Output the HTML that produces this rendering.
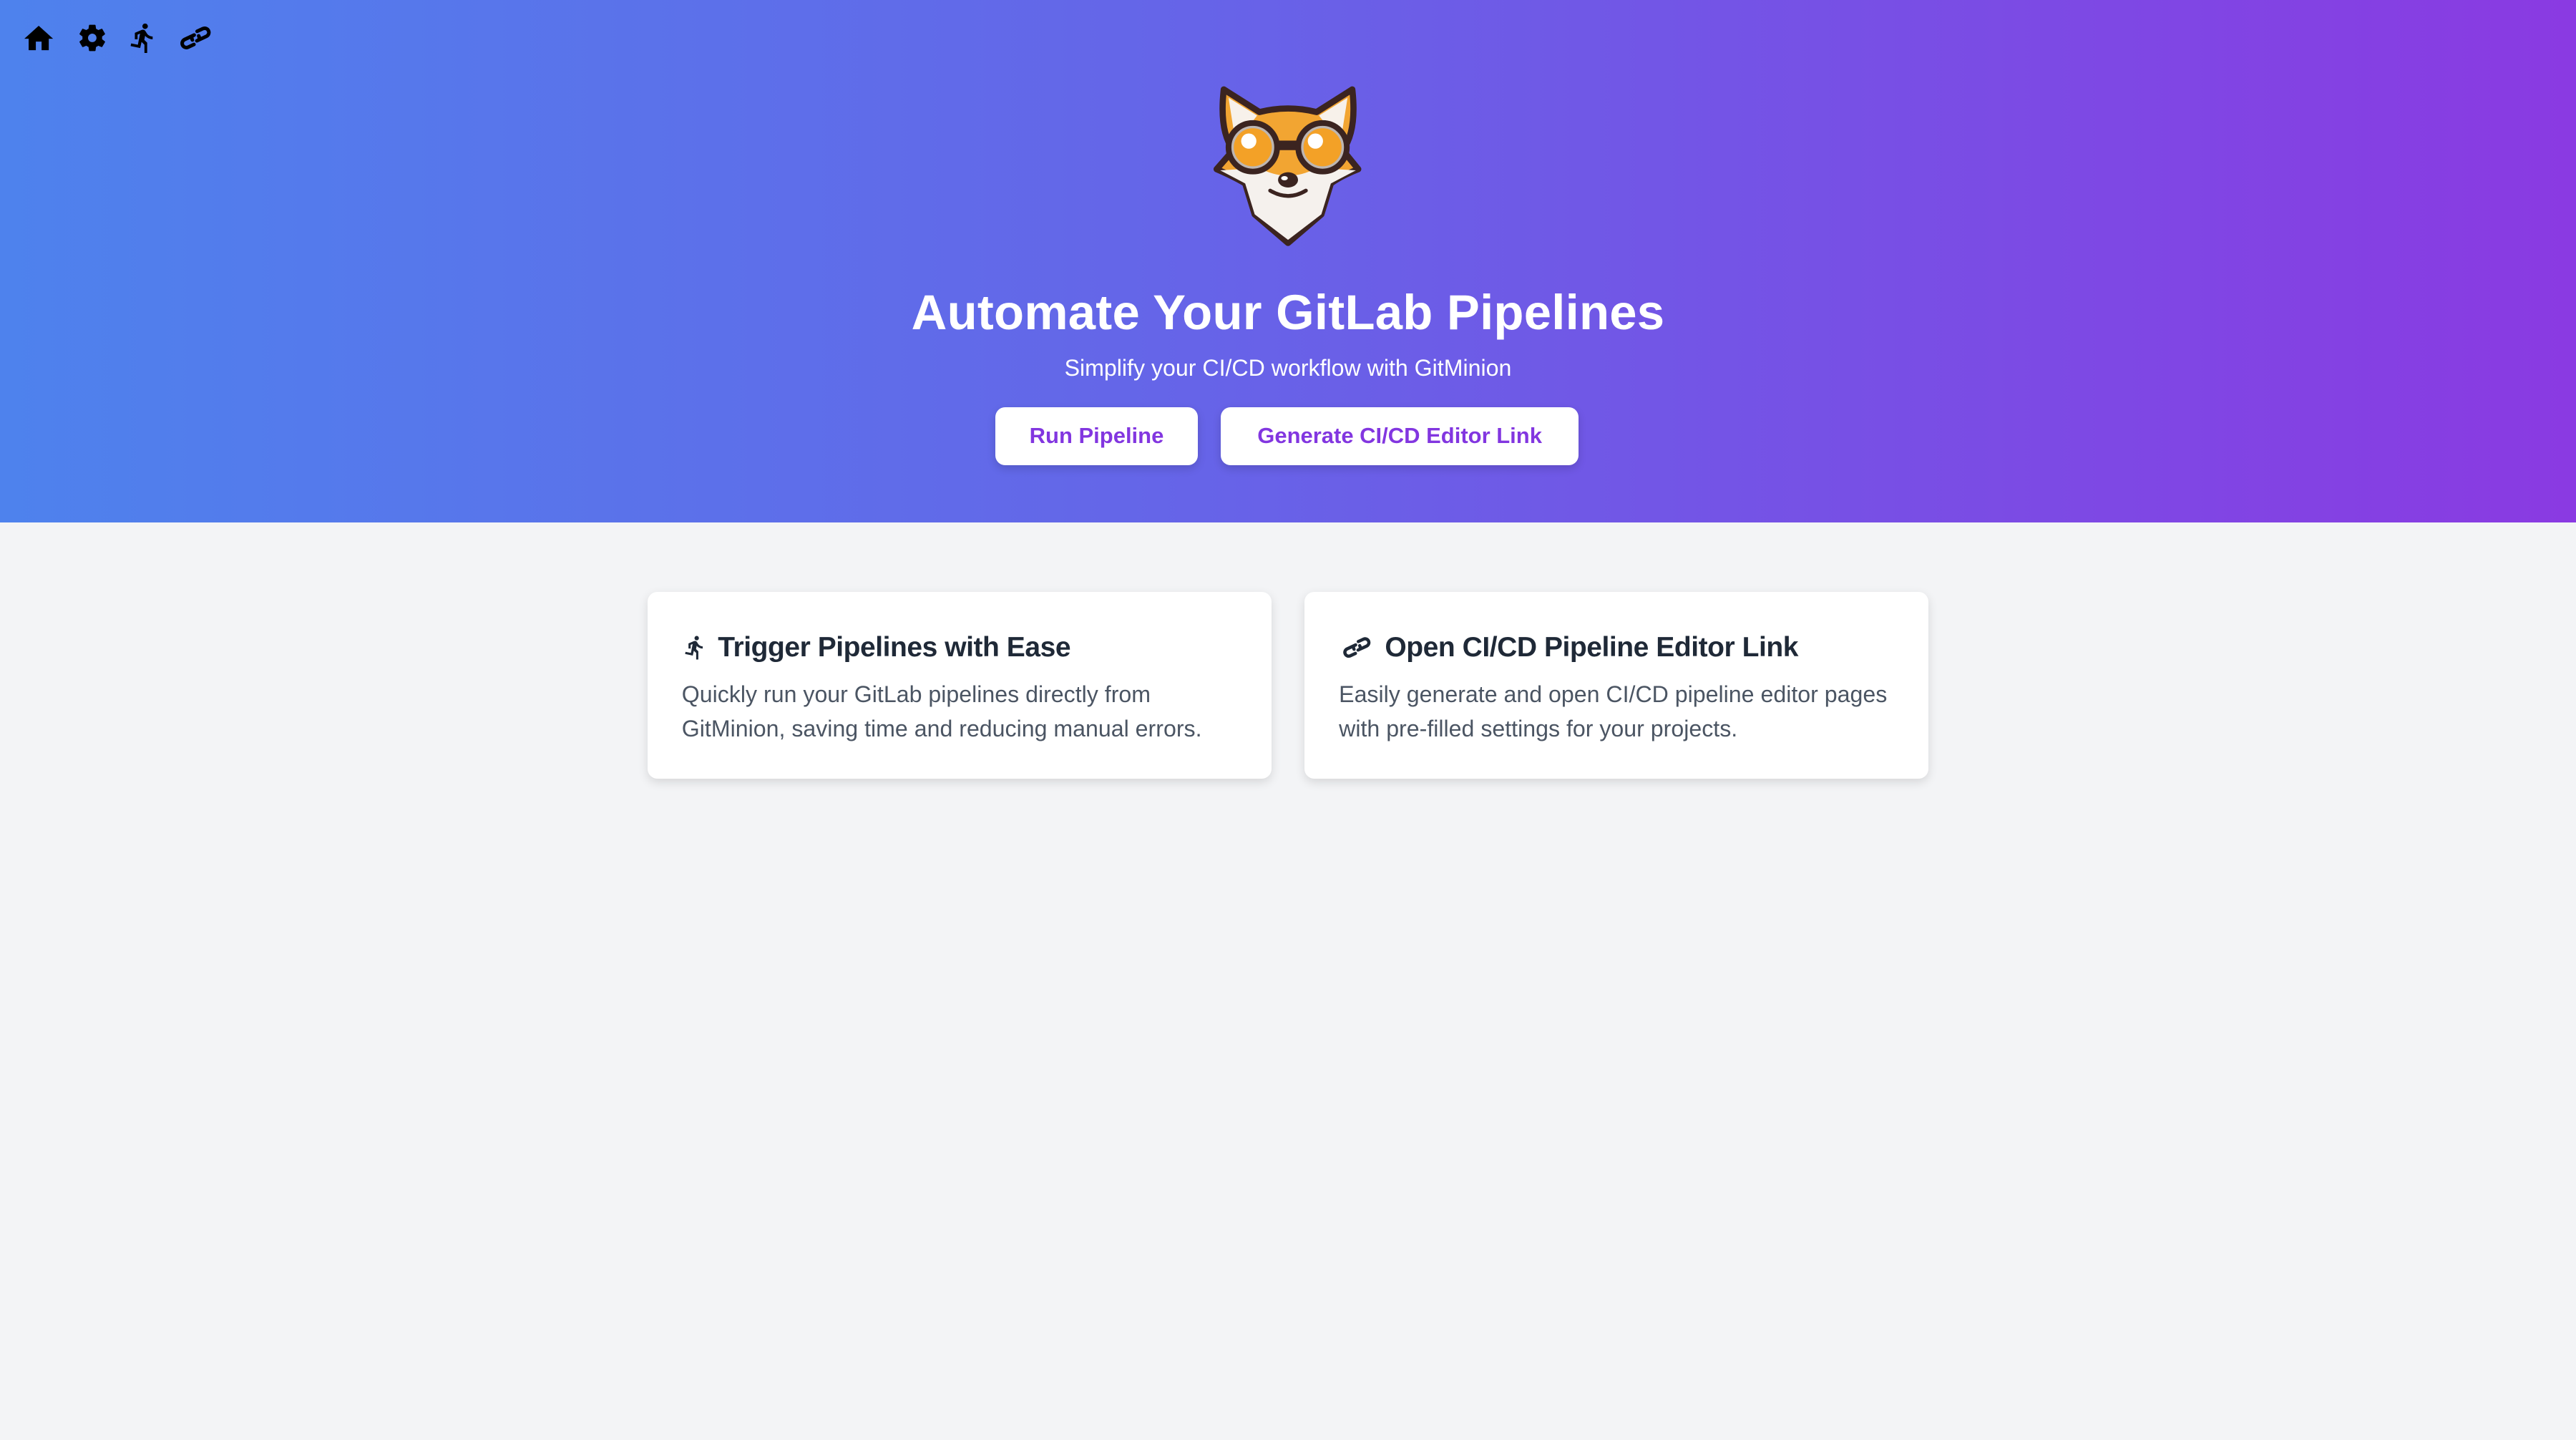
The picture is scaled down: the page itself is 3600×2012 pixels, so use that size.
<!DOCTYPE html>
<html><head><meta charset="utf-8">
<style>
html{zoom:2.2959;}
*{box-sizing:border-box;margin:0;padding:0}
body{width:1568px;height:876px;background:#f3f4f6;font-family:"Liberation Sans",sans-serif;overflow:hidden;position:relative}
.hero{position:absolute;left:0;top:0;width:1568px;height:318px;background:linear-gradient(to right,#4e82ed 0%,#6565e8 45%,#8a3ae2 100%)}
.nav{position:absolute;top:13px;left:13px;height:20px}
.nav svg{position:absolute;top:0}
.fox{position:absolute;left:723px;top:43.6px;width:122px;height:113px}
h1{position:absolute;top:173px;left:0;width:1568px;text-align:center;color:#fff;font-size:30px;font-weight:bold;letter-spacing:0.1px}
.sub{position:absolute;top:216px;left:0;width:1568px;text-align:center;color:#fff;font-size:14px}
.btn{position:absolute;top:248px;height:35px;background:#fff;border-radius:6px;color:#8236e0;font-weight:bold;font-size:13.5px;line-height:35px;text-align:center;box-shadow:0 2px 5px rgba(0,0,0,.15)}
.card{position:absolute;top:360px;width:380px;height:114px;background:#fff;border-radius:6px;box-shadow:0 2px 6px rgba(0,0,0,.12);padding:21px}
.card h2{font-size:17px;font-weight:bold;color:#1f2937;height:24px;line-height:24px;display:flex;align-items:center;gap:6px;margin-top:1px;letter-spacing:-0.2px}
.card p{font-size:14px;line-height:21px;color:#4b5563;margin-top:6px}
</style></head><body>
<div class="hero">
 <div class="nav">
  <svg style="left:0" width="21" height="21" viewBox="0 0 24 24"><path d="M10 20v-6h4v6h5v-8h3L12 3 2 12h3v8z" fill="#000"/></svg>
  <svg style="left:33px" width="20" height="20" viewBox="0 0 24 24"><path fill="#000" d="M19.14 12.94c.04-.3.06-.61.06-.94 0-.32-.02-.64-.07-.94l2.030-1.58c.18-.14.23-.41.12-.61l-1.92-3.32c-.12-.22-.37-.29-.59-.22l-2.39.96c-.5-.38-1.030-.7-1.62-.94l-.36-2.54c-.04-.24-.24-.41-.48-.41h-3.84c-.24 0-.43.17-.47.41l-.36 2.54c-.59.24-1.13.57-1.62.94l-2.39-.96c-.22-.08-.47 0-.59.22L2.74 8.87c-.12.21-.08.47.12.61l2.03 1.58c-.05.3-.09.63-.09.94s.02.64.07.94l-2.03 1.58c-.18.14-.23.41-.12.61l1.92 3.32c.12.22.37.29.59.22l2.39-.96c.5.38 1.03.7 1.62.94l.36 2.54c.05.24.24.41.48.41h3.84c.24 0 .44-.17.47-.41l.36-2.54c.59-.24 1.13-.56 1.62-.94l2.39.96c.22.08.47 0 .59-.22l1.92-3.32c.12-.22.07-.47-.12-.61l-2.01-1.58zM12 15.1c-1.71 0-3.1-1.39-3.1-3.1s1.39-3.1 3.1-3.1 3.1 1.39 3.1 3.1-1.39 3.1-3.1 3.1z"/></svg>
  <svg style="left:64px" width="20" height="20" viewBox="0 0 24 24"><path fill="#000" d="M13.49 5.48c1.1 0 2-.9 2-2s-.9-2-2-2-2 .9-2 2 .9 2 2 2zm-3.6 13.9l1-4.4 2.1 2v6h2v-7.5l-2.1-2 .6-3c1.3 1.5 3.3 2.5 5.5 2.5v-2c-1.9 0-3.5-1-4.3-2.4l-1-1.6c-.4-.6-1-1-1.7-1-.3 0-.5.1-.8.1l-5.2 2.2v4.7h2v-3.4l1.8-.7-1.6 8.1-4.9-1-.4 2 7 1.4z"/></svg>
  <svg style="left:95px" width="22" height="20" viewBox="0 0 24 22"><g fill="none" stroke="#000" stroke-width="2.4" stroke-linecap="round" transform="rotate(20 12 11)"><path d="M10.5 9.5l-5 5a2.8 2.8 0 0 0 4 4l3-3"/><path d="M13.5 12.5l5-5a2.8 2.8 0 0 0-4-4l-3 3"/><path d="M9.5 11.5a2.8 2.8 0 0 0 1 1.5M14.5 10.5a2.8 2.8 0 0 0-1-1.5"/></g></svg>
 </div>
 <svg class="fox" viewBox="0 0 840 780">
  <path d="M150,75 L300,170 Q420,140 540,170 L690,75 Q710,250 650,330 L715,410 Q640,440 600,470 L560,600 L420,720 L280,600 L240,470 Q190,440 120,410 L190,330 Q130,250 150,75 Z" fill="#f2a532" stroke="#3b2420" stroke-width="26" stroke-linejoin="round"/>
  <path d="M170,110 L290,185 L200,300 Z" fill="#f7f1ea"/><path d="M670,110 L550,185 L640,300 Z" fill="#f7f1ea"/>
  <path d="M135,415 L300,405 Q420,470 540,405 L705,415 L600,470 L560,600 L420,707 L280,600 L240,470 Z" fill="#f5f1ed"/>
  <rect x="330" y="290" width="180" height="40" fill="#3b2420"/>
  <g stroke="#3b2420" stroke-width="24"><circle cx="272" cy="318" r="102" fill="#bdb6b2"/><circle cx="565" cy="318" r="102" fill="#bdb6b2"/></g>
  <circle cx="272" cy="318" r="80" fill="#f3a127"/><circle cx="565" cy="318" r="80" fill="#f3a127"/>
  <circle cx="255" cy="292" r="32" fill="#fff"/><circle cx="535" cy="292" r="32" fill="#fff"/>
  <ellipse cx="420" cy="455" rx="42" ry="32" fill="#3b2420"/><ellipse cx="405" cy="448" rx="14" ry="9" fill="#fff"/>
  <path d="M345,500 Q420,545 495,500" fill="none" stroke="#3b2420" stroke-width="16" stroke-linecap="round"/>
 </svg>
 <h1>Automate Your GitLab Pipelines</h1>
 <div class="sub">Simplify your CI/CD workflow with GitMinion</div>
 <div class="btn" style="left:606px;width:123px">Run Pipeline</div>
 <div class="btn" style="left:743px;width:218px">Generate CI/CD Editor Link</div>
</div>
<div class="card" style="left:394px">
 <h2><svg width="16" height="18" viewBox="0 0 24 24"><path fill="#1f2937" d="M13.49 5.48c1.1 0 2-.9 2-2s-.9-2-2-2-2 .9-2 2 .9 2 2 2zm-3.6 13.9l1-4.4 2.1 2v6h2v-7.5l-2.1-2 .6-3c1.3 1.5 3.3 2.5 5.5 2.5v-2c-1.9 0-3.5-1-4.3-2.4l-1-1.6c-.4-.6-1-1-1.7-1-.3 0-.5.1-.8.1l-5.2 2.2v4.7h2v-3.4l1.8-.7-1.6 8.1-4.9-1-.4 2 7 1.4z"/></svg>Trigger Pipelines with Ease</h2>
 <p>Quickly run your GitLab pipelines directly from GitMinion, saving time and reducing manual errors.</p>
</div>
<div class="card" style="left:794px">
 <h2><svg width="22" height="18" viewBox="0 0 24 22"><g fill="none" stroke="#1f2937" stroke-width="2.4" stroke-linecap="round" transform="rotate(20 12 11)"><path d="M10.5 9.5l-5 5a2.8 2.8 0 0 0 4 4l3-3"/><path d="M13.5 12.5l5-5a2.8 2.8 0 0 0-4-4l-3 3"/><path d="M9.5 11.5a2.8 2.8 0 0 0 1 1.5M14.5 10.5a2.8 2.8 0 0 0-1-1.5"/></g></svg>Open CI/CD Pipeline Editor Link</h2>
 <p>Easily generate and open CI/CD pipeline editor pages with pre-filled settings for your projects.</p>
</div>
</body></html>
